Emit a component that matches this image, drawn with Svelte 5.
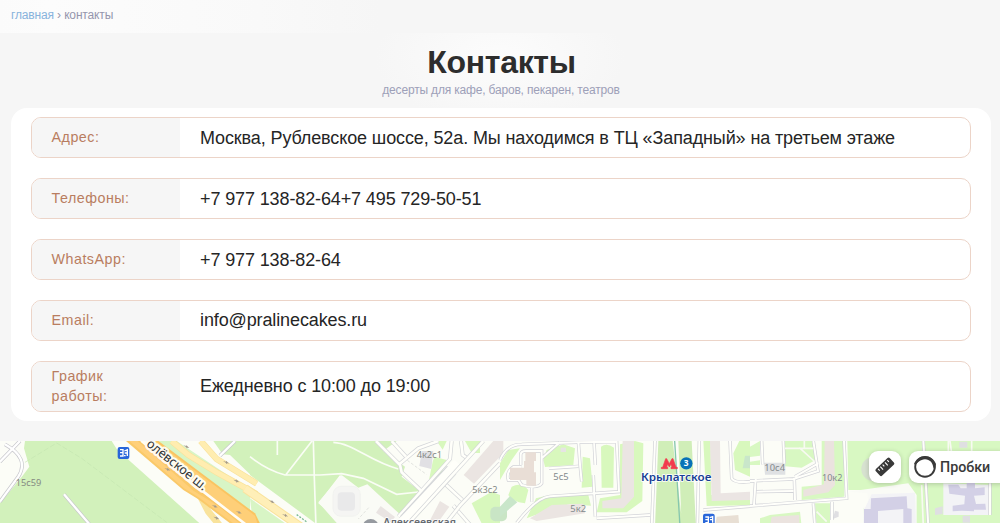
<script>
  const rows = [
    { label: 'Адрес:', value: 'Москва, Рублевское шоссе, 52а. Мы находимся в ТЦ «Западный» на третьем этаже' },
    { label: 'Телефоны:', value: '+7 977 138-82-64+7 495 729-50-51' },
    { label: 'WhatsApp:', value: '+7 977 138-82-64' },
    { label: 'Email:', value: 'info@pralinecakes.ru' },
    { label: 'График работы:', value: 'Ежедневно с 10:00 до 19:00', tall: true }
  ];
</script>

<div class="page">
  <nav><a href="#home">главная</a> › контакты</nav>
  <header>
    <h1>Контакты</h1>
    <p>десерты для кафе, баров, пекарен, театров</p>
  </header>
  <main>
    {#each rows as row}
      <section class:tall={row.tall}>
        <div class="label"><span>{row.label}</span></div>
        <div class="value">{row.value}</div>
      </section>
    {/each}
  </main>
  <div class="map">
    <svg class="canvas" width="1000" height="82" viewBox="0 441 1000 82">
      <rect y="441" width="1000" height="82" fill="#fcfdf7" />

      <!-- park and highway -->
      <g transform="translate(0 435) scale(.33333)">
        <path fill="#d2f1bb" d="M75 18H335L350 42 392 80 610 275H0V205L68 122 88 95 72 40z" />
        <path fill="#d8f5c5" d="M465 18H530L750 165V250L700 205z" />
        <path fill="#d2f1bb" d="M640 18H750V118L690 60 668 58z" />
        <path fill="#d2f1bb" d="M750 18H1190L1150 48 1215 95 1205 125 1265 172 1195 245 1110 190 1020 120 955 205 1040 275H960L750 120z" />
        <path fill="#d8f5c5" d="M750 190L870 275H760z" />
        <path fill="none" stroke="#c4e5b0" stroke-width="2" stroke-dasharray="16 6" d="M75 82L170 24 245 70 500 262" />
        <g fill="none" stroke="#f9e29b" stroke-width="19">
          <path d="M515 18L565 60 650 112 770 178" />
          <path d="M602 18L650 72 770 146" />
        </g>
        <g fill="none" stroke="#ffedb0" stroke-width="15">
          <path d="M515 18L565 60 650 112 770 178" />
          <path d="M602 18L650 72 770 146" />
        </g>
        <path fill="none" stroke="#f9e39c" stroke-width="20" d="M598 178L625 230 662 275" />
        <path fill="none" stroke="#f9e39c" stroke-width="27" d="M735 160L930 295" />
        <path fill="none" stroke="#ffefb8" stroke-width="21" d="M735 160L930 295" />
        <path fill="#fac969" d="M378 18H420L585 160 660 205 750 276H705L595 193 550 165z" />
        <path fill="#ffd07a" d="M388 18H413L580 167 655 213 730 274H712L600 190 552 160z" />
        <path fill="#fac461" d="M436 14H470L765 235 785 275H740L605 175z" />
        <path fill="#fecf78" d="M446 18H466L765 242 775 275H745L608 172z" />
        <path fill="none" stroke="#fffdf6" stroke-width="8" d="M425 18L580 146 610 170 742 272" />
        <g fill="none" stroke="#c7c7cc" stroke-width="11">
          <path d="M0 80L60 18M15 28Q90 70 55 125L0 200M192 178L272 272M660 62L705 18" />
        </g>
        <path fill="none" stroke="#fff" stroke-width="7" d="M0 80L60 18M15 28Q90 70 55 125L0 200M192 178L272 272M660 62L705 18" />
        <g fill="none" stroke="#fafdf5" stroke-width="5">
          <path d="M750 65Q800 105 855 120H960L1025 116 1090 130 1190 178 1255 171M832 18V60M936 18L857 120M940 18L943 130 948 275M1000 22C1060 25 1110 80 1195 102" />
        </g>
        <g fill="#a39a8c">
          {#each [[558,35],[677,82],[708,138],[501,103],[643,214],[648,249],[715,232],[814,200],[854,241]] as p}
            <path d="M-8-4L1-2V-5L6 0 10 4 5 3 1 5V2z" transform="translate({p[0]} {p[1]})" />
          {/each}
        </g>
        <text transform="translate(437 31) rotate(38.5)" font-size="38" fill="#303335" stroke="#fffbf0" stroke-width="14" stroke-linejoin="round" paint-order="stroke" textLength="220" lengthAdjust="spacingAndGlyphs">олёвское ш.</text>
        <text x="47" y="152" font-size="29" fill="#858a82" textLength="77" lengthAdjust="spacingAndGlyphs">15с59</text>
        <g transform="translate(353 36)">
          <rect width="35" height="36" rx="6" fill="#2866d9" />
          <path d="M7 8H16V27H7M7 17H15M20 12L29 8V27M21 18H29M19 26H24" fill="none" stroke="#fff" stroke-width="4" />
        </g>
      </g>

      <!-- school and residential blocks -->
      <g transform="translate(250 435) scale(.33333)">
        <path fill="#fafbf6" d="M275 120L325 158 352 148 450 238V275H270L205 202z" />
        <rect x="249" y="154" width="82" height="90" rx="24" fill="#f5f5f3" stroke="#eff0ed" stroke-width="2" />
        <rect x="263" y="172" width="52" height="55" rx="12" fill="#e9e9ea" />
        <path fill="#e9e4e2" d="M392 213L435 246 422 262 378 233z" />
        <path fill="#d8f8bd" d="M553 65L590 75 575 113 535 145 548 80zM510 198L523 200 515 230 480 264 440 275 475 225zM560 18H590L578 44zM645 18H690V54H665zM665 205L725 170 750 180V275H700z" />
        <path fill="#e1e0e4" d="M516 48H550L544 102 508 93z" />
        <path fill="#ebe5e2" d="M730 18H760V55L672 146 641 120zM570 198L598 215 555 275H530z" />
        <g fill="none" stroke="#d3d5d8" stroke-width="12">
          <path d="M378 18L450 90 455 112 517 170M425 18L468 65M445 90L505 40 565 18M605 18L600 72 445 245M633 18L638 60 655 72M580 142L637 195M610 212L665 275" />
        </g>
        <path fill="none" stroke="#fffffa" stroke-width="8" d="M378 18L450 90 455 112 517 170M425 18L468 65M445 90L505 40 565 18M605 18L600 72 445 245M633 18L638 60 655 72M580 142L637 195M610 212L665 275" />
        <path fill="none" stroke="#d3d5d8" stroke-width="38" d="M605 105L465 255" />
        <path fill="none" stroke="#fffffa" stroke-width="33" d="M625 85L460 262" />
        <path fill="none" stroke="#d3d5d8" stroke-width="12" d="M700 18L480 260M750 85L630 212 580 275" />
        <path fill="none" stroke="#fffffa" stroke-width="8" d="M700 18L480 260M750 85L630 212 580 275" />
        <path fill="none" stroke="#e1e3df" stroke-width="3" stroke-dasharray="9 5" d="M472 76L529 118M356 218L325 252" />
        <rect x="721" y="215" width="50" height="44" rx="15" fill="#c9e5c5" />
        <text x="500" y="70" font-size="27" fill="#858a86" textLength="76" lengthAdjust="spacingAndGlyphs">4к2с1</text>
        <text x="667" y="174" font-size="27" fill="#858a86" textLength="76" lengthAdjust="spacingAndGlyphs">5к3с2</text>
        <circle cx="362" cy="276" r="24" fill="#969aa0" />
        <text x="400" y="274" font-size="31" font-weight="600" fill="#656a70" stroke="#fff" stroke-width="4" paint-order="stroke" textLength="218" lengthAdjust="spacingAndGlyphs">Алексеевская</text>
        <path d="M140 239L172 262" stroke="#78b992" stroke-width="4" stroke-dasharray="6 4" />
      </g>

      <!-- metro district -->
      <g transform="translate(500 435) scale(.33333)">
        <path fill="#d8f8bd" d="M0 85L25 45 60 40 35 75 0 135zM140 45L190 28 225 40 220 90 135 96 130 75zM248 65L270 70 278 155 245 158zM303 35Q320 22 342 38L340 158H305zM35 155Q65 140 85 165L75 205Q35 200 25 180zM108 190Q160 175 265 180L273 212 210 207 100 242 80 250zM300 190L360 180 360 28 405 18 430 25 427 198 380 232H290zM610 18H632L634 180 750 190V211L620 213zM700 55L718 18H750V125L705 105z" />
        <path fill="#d0eeb8" d="M475 18H518L548 275H465zM535 18H575L588 275H545z" />
        <path fill="#86c6ae" d="M522 18L538 275H542L526 18z" />
        <path fill="#c9e6ca" d="M30 183L52 202 0 245V215zM735 62H750V100H728z" />
        <path fill="#ebe5e3" d="M368 18H402V185L370 220H307V198L364 190zM630 18H660L662 175 750 170V195L635 198z" />
        <path fill="#ebe5e2" d="M155 210L250 206 255 235 110 258 90 250z" />
        <path fill="#e8dfd4" d="M650 245L715 240 718 275H645z" />
        <path fill="#e6e4e4" d="M182 38H198V51H182z" />
        <g fill="none" stroke="#d1d2d7" stroke-width="10">
          <path d="M0 75Q20 28 65 28L230 22 350 20 357 170 150 184Q110 187 50 264M62 90V60Q62 48 78 48H125V145Q115 162 65 150L55 135H25Q18 110 40 96H65M125 70L180 22M235 20L240 88 245 140M147 100L235 94M282 18L286 90M280 120L286 245M95 158V200M465 18L455 275M598 18L592 275M690 18L695 130Q705 145 750 140M610 225L750 214M290 250L450 240" />
        </g>
        <path fill="none" stroke="#fffffb" stroke-width="6" d="M0 75Q20 28 65 28L230 22 350 20 357 170 150 184Q110 187 50 264M62 90V60Q62 48 78 48H125V145Q115 162 65 150L55 135H25Q18 110 40 96H65M125 70L180 22M235 20L240 88 245 140M147 100L235 94M282 18L286 90M280 120L286 245M95 158V200M465 18L455 275M598 18L592 275M690 18L695 130Q705 145 750 140M610 225L750 214M290 250L450 240" />
        <path fill="#e9ded6" d="M76 52H108V78H102V112H108V152H79V135H30V98H72V78H76z" />
        <text x="160" y="136" font-size="27" fill="#838a8c" textLength="46" lengthAdjust="spacingAndGlyphs">5с5</text>
        <text x="211" y="230" font-size="27" fill="#838a8c" textLength="47" lengthAdjust="spacingAndGlyphs">5к2</text>
        <path d="M484 101V97H488L497 71H500L508 86 516 71H519L528 97H532V101H513V97H516L513 87 508 96 503 87 500 97H503V101z" fill="#f23a4d" stroke="#f23a4d" stroke-width="2" />
        <circle cx="559" cy="85" r="18.5" fill="#0872b7" />
        <text x="551.5" y="94" font-size="25" font-weight="700" fill="#fff">3</text>
        <text x="423" y="137" font-size="33" font-weight="600" fill="#173e94" stroke="#fff" stroke-width="4" paint-order="stroke" textLength="211" lengthAdjust="spacingAndGlyphs">Крылатское</text>
        <g transform="translate(609 236)">
          <rect width="35" height="36" rx="6" fill="#2866d9" />
          <path d="M7 10H16V27H7M7 18H15M20 12L29 9V27M21 18H29" fill="none" stroke="#fff" stroke-width="4" />
        </g>
      </g>

      <!-- eastern blocks -->
      <g transform="translate(750 435) scale(.33333)">
        <path fill="#d8f8c2" d="M0 35L30 18V62L0 66zM0 80L30 76V90H0zM104 18H195V76L155 98 105 94zM215 18H283V185L155 195V155L215 150zM292 18H750V275H345L340 220H355V165H295zM60 240L150 230 155 275H30V250zM195 205H240V275H200z" />
        <path fill="#fafbf6" d="M295 170L475 145 500 180V275H340V215H356L352 175z" />
        <path fill="#ebe3df" d="M224 18H252L255 150 235 172 160 185V165L222 148zM65 245L148 240V275H60z" />
        <path fill="#dfe1e3" d="M42 83H106V119H45z" />
        <path fill="#f3f3f6" d="M365 178L495 173 498 275H340L342 225zM580 145L720 150V240H580z" />
        <path fill="#d3d0e6" d="M363 190L470 184 472 220 485 222V275H460V222L384 228V275H342V222H362zM595 149H625L632 160H650V143H675V160L704 157V180L672 182 678 207 706 206 708 224H672V229L635 227 608 229V212L643 208 645 182 598 176z" />
        <path fill="#dfdfe2" d="M555 220L578 214V237L555 240zM638 242H660V263H638zM628 20H652V38H628zM255 227L266 230V245L248 252z" />
        <path fill="none" stroke="#d1d2d7" stroke-width="10" d="M35 18L38 88M100 18L103 86M190 18L204 108 130 132 0 138M205 85L135 125M282 18L290 190 0 213M17 132L12 210M133 132L135 195M20 170L130 168M246 200V255M190 205L195 275M520 18L535 275M720 145V240" />
        <path fill="none" stroke="#fffffb" stroke-width="6" d="M35 18L38 88M100 18L103 86M190 18L204 108 130 132 0 138M205 85L135 125M282 18L290 190 0 213M17 132L12 210M133 132L135 195M20 170L130 168M246 200V255M190 205L195 275M520 18L535 275M720 145V240" />
        <path fill="none" stroke="#f8faf2" stroke-width="5" d="M105 40H190M148 38L192 78M163 18V38M600 18L605 55M665 18V55M200 230L230 260M515 150L520 275M595 18V50" />
        <circle cx="370" cy="102" r="36" fill="#d7d9d5" opacity=".7" />
        <text x="43" y="108" font-size="27" fill="#838a8c" textLength="62" lengthAdjust="spacingAndGlyphs">10с4</text>
        <text x="216" y="138" font-size="27" fill="#838a8c" textLength="61" lengthAdjust="spacingAndGlyphs">10к2</text>
      </g>
    </svg>
    <button class="ruler" aria-label="Линейка">
      <svg width="32" height="32" viewBox="0 0 32 32">
        <g transform="rotate(-43 16 16)">
          <rect x="6.4" y="11.2" width="19.2" height="9.2" rx="1.7" fill="#393939" />
          <path d="M9.7 12.6V15M12.8 12.6V16.6M16 12.6V15M19.2 12.6V16.6M22.3 12.6V15" stroke="#fff" stroke-width="1.1" />
        </g>
      </svg>
    </button>
    <button class="traffic">
      <svg width="24" height="24" viewBox="0 0 24 24">
        <circle cx="12" cy="12" r="9.8" fill="none" stroke="#393939" stroke-width="1.9" />
        <path d="M1 9C3 4 7 1 12 1S21 4 23 9L22 14 20.5 13C19.5 7 17 4.8 12 4.3 7 4.8 5 7 2.7 10z" fill="#393939" />
      </svg>
      <span>Пробки</span>
    </button>
  </div>
</div>

<style>
  :global(body) { margin: 0; overflow: hidden; }
  .page { width: 1000px; height: 523px; display: flex; flex-direction: column; background: #f6f6f6; font-family: "Liberation Sans", Arial, sans-serif; overflow: hidden; }
  nav { height: 33px; box-sizing: border-box; padding: 8px 11px; font-size: 12px; letter-spacing: -.15px; line-height: 15px; color: #9596ad; background: linear-gradient(90deg, #fbfbfb 0, #fcfcfc 5%, #f9f9f9 26%, #f6f6f6 38%); }
  nav a { color: #88b3dc; text-decoration: none; }
  header { height: 75px; display: flex; flex-direction: column; align-items: center; background: radial-gradient(ellipse 125px 65px at 500px 25px, #fcfcfc, #f6f6f6); }
  h1 { margin: 9px 0 0 3px; font-size: 32px; line-height: 40px; letter-spacing: -.3px; color: #2d2d2d; }
  header p { margin: 1px 0 0 2px; font-size: 12px; letter-spacing: -.18px; line-height: 15px; color: #9da0b8; }
  main { height: 313px; box-sizing: border-box; flex: none; margin: 0 9px 20px 11px; padding: 9px 20px; background: #fff; border-radius: 16px; display: flex; flex-direction: column; gap: 20px; }
  section { display: flex; box-sizing: border-box; height: 41px; border: 1px solid #ecd4c8; border-radius: 10px; overflow: hidden; flex: none; }
  section.tall { height: 51px; }
  .label { width: 148px; box-sizing: border-box; padding: 0 40px 1px 19.5px; display: flex; align-items: center; background: #f6f6f6; color: #b97d60; font-size: 14.3px; line-height: 20px; letter-spacing: .5px; }
  .value { padding: 1px 0 0 20px; display: flex; align-items: center; white-space: nowrap; font-size: 18px; letter-spacing: -.12px; color: #252525; }
  section:nth-child(n + 4) .value { padding: 0 0 1px 20px; }
  .map { position: relative; height: 82px; flex: none; }
  .canvas { display: block; font-family: "Noto Sans", sans-serif; }
  button { position: absolute; top: 10px; height: 32px; border: 0; padding: 0; background: #fff; border-radius: 9px; box-shadow: 0 1px 5px #0003; }
  .ruler { left: 869px; width: 32px; }
  .ruler svg { display: block; }
  .traffic { left: 909px; width: 100px; display: flex; align-items: center; gap: 3.5px; padding-left: 3.5px; font: 500 14.3px Roboto, sans-serif; color: #393939; }
</style>
